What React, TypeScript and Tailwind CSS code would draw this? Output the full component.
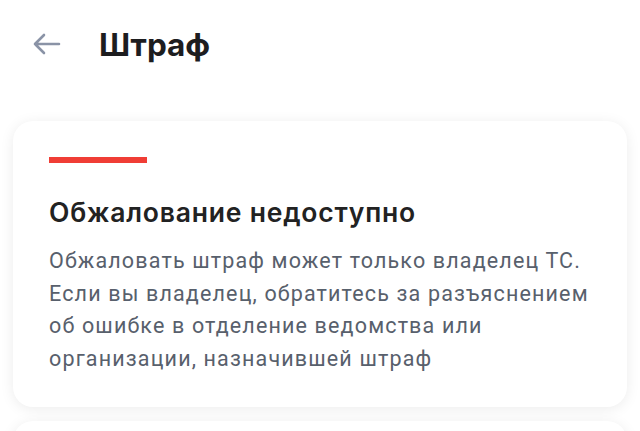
export default function App() {
  return (
    <div className="h-[431px] bg-white overflow-hidden" style={{ fontFamily: 'Roboto, "Noto Sans", sans-serif' }}>
      <header className="flex items-center h-[88px] pl-[33px]">
        <svg width="28" height="22" viewBox="0 0 28 22" fill="none" stroke="#8a93a6" strokeWidth="2.6" strokeLinecap="round" strokeLinejoin="round">
          <path d="M26 11H2M11 2L2 11l9 9" />
        </svg>
        <h1 className="ml-[38px] pt-[2px] text-[31.5px] font-bold text-[#1d1d1f] leading-none font-['Inter',sans-serif]">Штраф</h1>
      </header>
      <div className="px-[13px] pt-[33px] flex flex-col gap-[14px]">
        <div className="bg-white rounded-[20px] shadow-[0_2px_14px_rgba(0,0,0,0.08)] px-[36px] pt-[36px] pb-[32px]">
          <div className="w-[98px] h-[6px] bg-[#f03d35]" />
          <h2 className="mt-[33px] text-[26.5px] font-semibold tracking-[0.8px] text-[#222] leading-[32px] font-['Inter',sans-serif]">Обжалование недоступно</h2>
          <p className="mt-[17px] text-[21.5px] leading-[32.5px] tracking-[1.15px] text-[#58606c]">
            Обжаловать штраф может только владелец ТС.
            <br />
            Если вы владелец, обратитесь за разъяснением
            <br />
            об ошибке в отделение ведомства или
            <br />
            организации, назначившей штраф
          </p>
        </div>
        <div className="bg-white rounded-[20px] shadow-[0_2px_14px_rgba(0,0,0,0.08)] h-[100px]" />
      </div>
    </div>
  );
}
